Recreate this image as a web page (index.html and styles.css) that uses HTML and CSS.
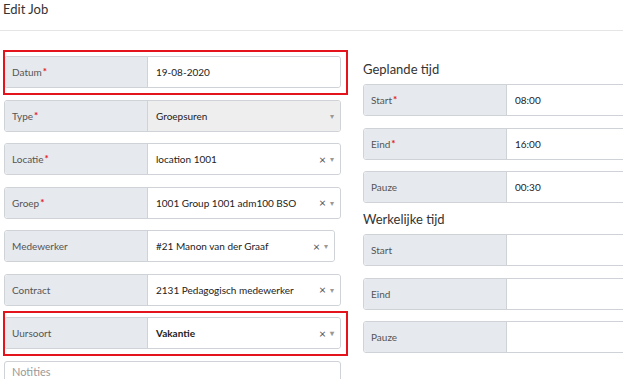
FILE: index.html
```html
<!DOCTYPE html>
<html lang="en">
<head>
    <meta charset="UTF-8">
    <meta name="viewport" content="width=device-width, initial-scale=1.0">
    <title>Edit Job</title>
    <link rel="stylesheet" href="styles.css">
</head>
<body>
    <div class="header">Edit Job</div>

    <div class="columns">
        <div class="col-left">
            <div class="field marked">
                <div class="label">Datum<span class="req">*</span></div>
                <div class="value">19-08-2020</div>
            </div>
            <div class="field">
                <div class="label">Type<span class="req">*</span></div>
                <div class="value disabled">Groepsuren<span class="caret">&#9662;</span></div>
            </div>
            <div class="field">
                <div class="label">Locatie<span class="req">*</span></div>
                <div class="value">location 1001<span class="clear">&times;</span><span class="caret">&#9662;</span></div>
            </div>
            <div class="field">
                <div class="label">Groep<span class="req">*</span></div>
                <div class="value">1001 Group 1001 adm100 BSO<span class="clear">&times;</span><span class="caret">&#9662;</span></div>
            </div>
            <div class="field narrow">
                <div class="label">Medewerker</div>
                <div class="value">#21 Manon van der Graaf<span class="clear">&times;</span><span class="caret">&#9662;</span></div>
            </div>
            <div class="field">
                <div class="label">Contract</div>
                <div class="value">2131 Pedagogisch medewerker<span class="clear">&times;</span><span class="caret">&#9662;</span></div>
            </div>
            <div class="field marked">
                <div class="label">Uursoort</div>
                <div class="value strong">Vakantie<span class="clear">&times;</span><span class="caret">&#9662;</span></div>
            </div>
            <div class="notes">Notities</div>
        </div>

        <div class="col-right">
            <h3>Geplande tijd</h3>
            <div class="field">
                <div class="label">Start<span class="req">*</span></div>
                <div class="value">08:00</div>
            </div>
            <div class="field">
                <div class="label">Eind<span class="req">*</span></div>
                <div class="value">16:00</div>
            </div>
            <div class="field last">
                <div class="label">Pauze</div>
                <div class="value">00:30</div>
            </div>

            <h3>Werkelijke tijd</h3>
            <div class="field">
                <div class="label">Start</div>
                <div class="value"></div>
            </div>
            <div class="field">
                <div class="label">Eind</div>
                <div class="value"></div>
            </div>
            <div class="field">
                <div class="label">Pauze</div>
                <div class="value"></div>
            </div>
        </div>
    </div>
</body>
</html>
```

FILE: styles.css
```css
body {
    margin: 0;
    font-family: Lato, "Open Sans", sans-serif;
    color: #333;
    overflow: hidden;
    background: #fff;
}
.header {
    height: 30px;
    padding-left: 3px;
    font-size: 13px;
    line-height: 18px;
    border-bottom: 1px solid #e5e5e5;
}
.columns {
    display: flex;
    margin-top: 25px;
    padding-left: 4px;
}
.col-left {
    width: 337px;
    flex-shrink: 0;
}
.col-right {
    width: 290px;
    flex-shrink: 0;
    margin-left: 22px;
    padding-top: 4px;
}
.col-right h3 {
    margin: 0 0 6px;
    font-size: 13px;
    font-weight: normal;
    line-height: 18px;
}
.col-right .field.last {
    margin-bottom: 7px;
}
.field {
    position: relative;
    display: flex;
    height: 32px;
    margin-bottom: 11.5px;
    border: 1px solid #cfd2d6;
    border-radius: 3px;
    box-sizing: border-box;
}
.field.narrow {
    width: 331px;
}
.field.marked::after {
    content: "";
    position: absolute;
    top: -7px;
    left: -2px;
    right: -8px;
    bottom: -8px;
    border: 2px solid #e3141c;
}
.label {
    width: 143px;
    flex-shrink: 0;
    display: flex;
    align-items: center;
    padding-left: 7px;
    box-sizing: border-box;
    background: #e6e9ee;
    border-right: 1px solid #cfd2d6;
    border-radius: 3px 0 0 3px;
    font-size: 10px;
    color: #555;
}
.req {
    color: #e3141c;
    font-weight: bold;
    margin-left: 1px;
    position: relative;
    top: -1px;
}
.value {
    flex: 1;
    display: flex;
    align-items: center;
    padding-left: 8px;
    padding-right: 6px;
    font-size: 10px;
    color: #222;
    background: #fff;
    border-radius: 0 3px 3px 0;
}
.value.disabled {
    background: #eee;
}
.value.strong {
    font-weight: bold;
}
.clear {
    margin-left: auto;
    font-size: 12px;
    font-weight: normal;
    color: #555;
}
.caret {
    margin-left: 4px;
    font-size: 8px;
    color: #999;
}
.value.disabled .caret {
    margin-left: auto;
}
.notes {
    height: 24px;
    padding-left: 7px;
    border: 1px solid #cfd2d6;
    border-radius: 3px;
    font-size: 11px;
    line-height: 20px;
    color: #999;
}
```
